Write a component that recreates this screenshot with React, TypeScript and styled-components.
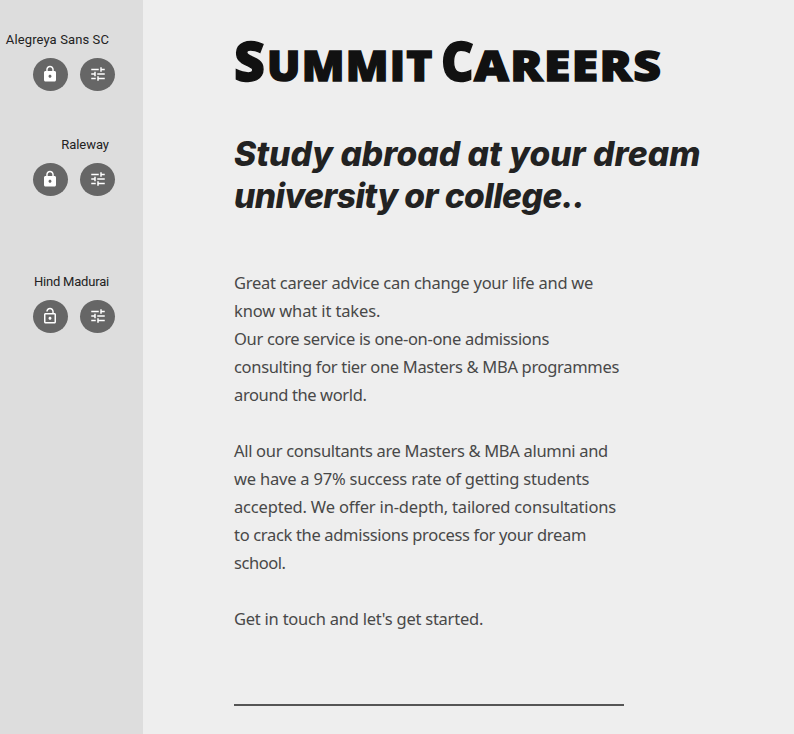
import React from 'react';
import styled, { createGlobalStyle } from 'styled-components';
import { MdLock, MdLockOpen, MdTune } from 'react-icons/md';

const GlobalStyle = createGlobalStyle`
  * { box-sizing: border-box; }
  body { margin: 0; background: #eee; }
`;

const Page = styled.div`
  display: flex;
  height: 734px;
  overflow: hidden;
  background: #eeeeee;
`;

const Sidebar = styled.aside`
  flex: none;
  width: 143px;
  padding-top: 30px;
  background: #dddddd;
`;

const FontControl = styled.section<{ $height: number }>`
  display: flex;
  flex-direction: column;
  align-items: flex-end;
  height: ${p => p.$height}px;
  padding-right: 28px;
`;

const FontName = styled.div<{ $spacing: number }>`
  height: 20px;
  margin: 0 6px 8px 0;
  font: 400 13px/20px Roboto, sans-serif;
  letter-spacing: ${p => p.$spacing}px;
  white-space: nowrap;
  color: #222;
`;

const Buttons = styled.div`
  display: flex;
  gap: 12px;
`;

const RoundButton = styled.button`
  display: flex;
  align-items: center;
  justify-content: center;
  width: 35px;
  height: 33px;
  padding: 0 1px 1px 0;
  border: 0;
  border-radius: 50%;
  background: #666;
  color: #fff;
  font-size: 18px;
`;

const TuneButton = styled(RoundButton)`
  padding: 0 0 1px 1px;
`;

const Content = styled.main`
  flex: 1;
  padding: 32px 0 0 91px;
`;

const Title = styled.h1`
  display: grid;
  grid-template-columns: 33px 174px 33px auto;
  align-items: baseline;
  height: 60px;
  margin: 0;
  font: 800 55px/60px "Open Sans", sans-serif;
  color: #111;
  -webkit-text-stroke: 1.4px #111;
  white-space: nowrap;
`;

const Initial = styled.span<{ $stretch: number }>`
  justify-self: start;
  transform: translateY(-2px) scaleX(${p => p.$stretch});
  transform-origin: left;
`;

const SmallCaps = styled.span<{ $stretch: number }>`
  justify-self: start;
  font-size: 42.5px;
  letter-spacing: 1.2px;
  transform: translateY(-2px) scaleX(${p => p.$stretch});
  transform-origin: left;
`;

const Tagline = styled.h2`
  margin: 41px 0 0;
  font: italic 800 33.6px/42px Inter, sans-serif;
  color: #222;
`;

const Copy = styled.div`
  margin-top: 52px;
  font: 400 16.5px/28px "Noto Sans", sans-serif;
  color: #484848;
`;

const Paragraph = styled.p`
  margin: 0 0 28px;
`;

const Line = styled.span<{ $spacing: number }>`
  display: block;
  white-space: nowrap;
  letter-spacing: ${p => p.$spacing}px;
`;

const Rule = styled.hr`
  width: 390px;
  height: 2px;
  margin: 71px 0 0;
  border: 0;
  background: #555;
`;

const fonts = [
  { name: 'Alegreya Sans SC', locked: true, height: 105, spacing: 0.11 },
  { name: 'Raleway', locked: true, height: 137, spacing: -0.03 },
  { name: 'Hind Madurai', locked: false, height: 105, spacing: -0.2 },
];

const tagline = [
  { text: 'Study abroad at your dream', spacing: 0.02 },
  { text: 'university or college..', spacing: -0.6 },
];

const paragraphs = [
  [
    { text: 'Great career advice can change your life and we', spacing: -0.25 },
    { text: 'know what it takes.', spacing: -0.13 },
    { text: 'Our core service is one-on-one admissions', spacing: -0.32 },
    { text: 'consulting for tier one Masters & MBA programmes', spacing: -0.32 },
    { text: 'around the world.', spacing: -0.38 },
  ],
  [
    { text: 'All our consultants are Masters & MBA alumni and', spacing: -0.31 },
    { text: 'we have a 97% success rate of getting students', spacing: -0.21 },
    { text: 'accepted. We offer in-depth, tailored consultations', spacing: -0.18 },
    { text: 'to crack the admissions process for your dream', spacing: -0.33 },
    { text: 'school.', spacing: -0.45 },
  ],
  [{ text: "Get in touch and let's get started.", spacing: -0.24 }],
];

export default function App() {
  return (
    <Page>
      <GlobalStyle />
      <Sidebar>
        {fonts.map(font => (
          <FontControl key={font.name} $height={font.height}>
            <FontName $spacing={font.spacing}>{font.name}</FontName>
            <Buttons>
              <RoundButton aria-label="Lock font">{font.locked ? <MdLock /> : <MdLockOpen />}</RoundButton>
              <TuneButton aria-label="Adjust font"><MdTune /></TuneButton>
            </Buttons>
          </FontControl>
        ))}
      </Sidebar>
      <Content>
        <Title>
          <Initial $stretch={0.97}>S</Initial>
          <SmallCaps $stretch={1.04}>UMMIT</SmallCaps>
          <Initial $stretch={0.92}>C</Initial>
          <SmallCaps $stretch={1.13}>AREERS</SmallCaps>
        </Title>
        <Tagline>
          {tagline.map(l => <Line key={l.text} $spacing={l.spacing}>{l.text}</Line>)}
        </Tagline>
        <Copy>
          {paragraphs.map(lines => (
            <Paragraph key={lines[0].text}>
              {lines.map(l => <Line key={l.text} $spacing={l.spacing}>{l.text}</Line>)}
            </Paragraph>
          ))}
        </Copy>
        <Rule />
      </Content>
    </Page>
  );
}
